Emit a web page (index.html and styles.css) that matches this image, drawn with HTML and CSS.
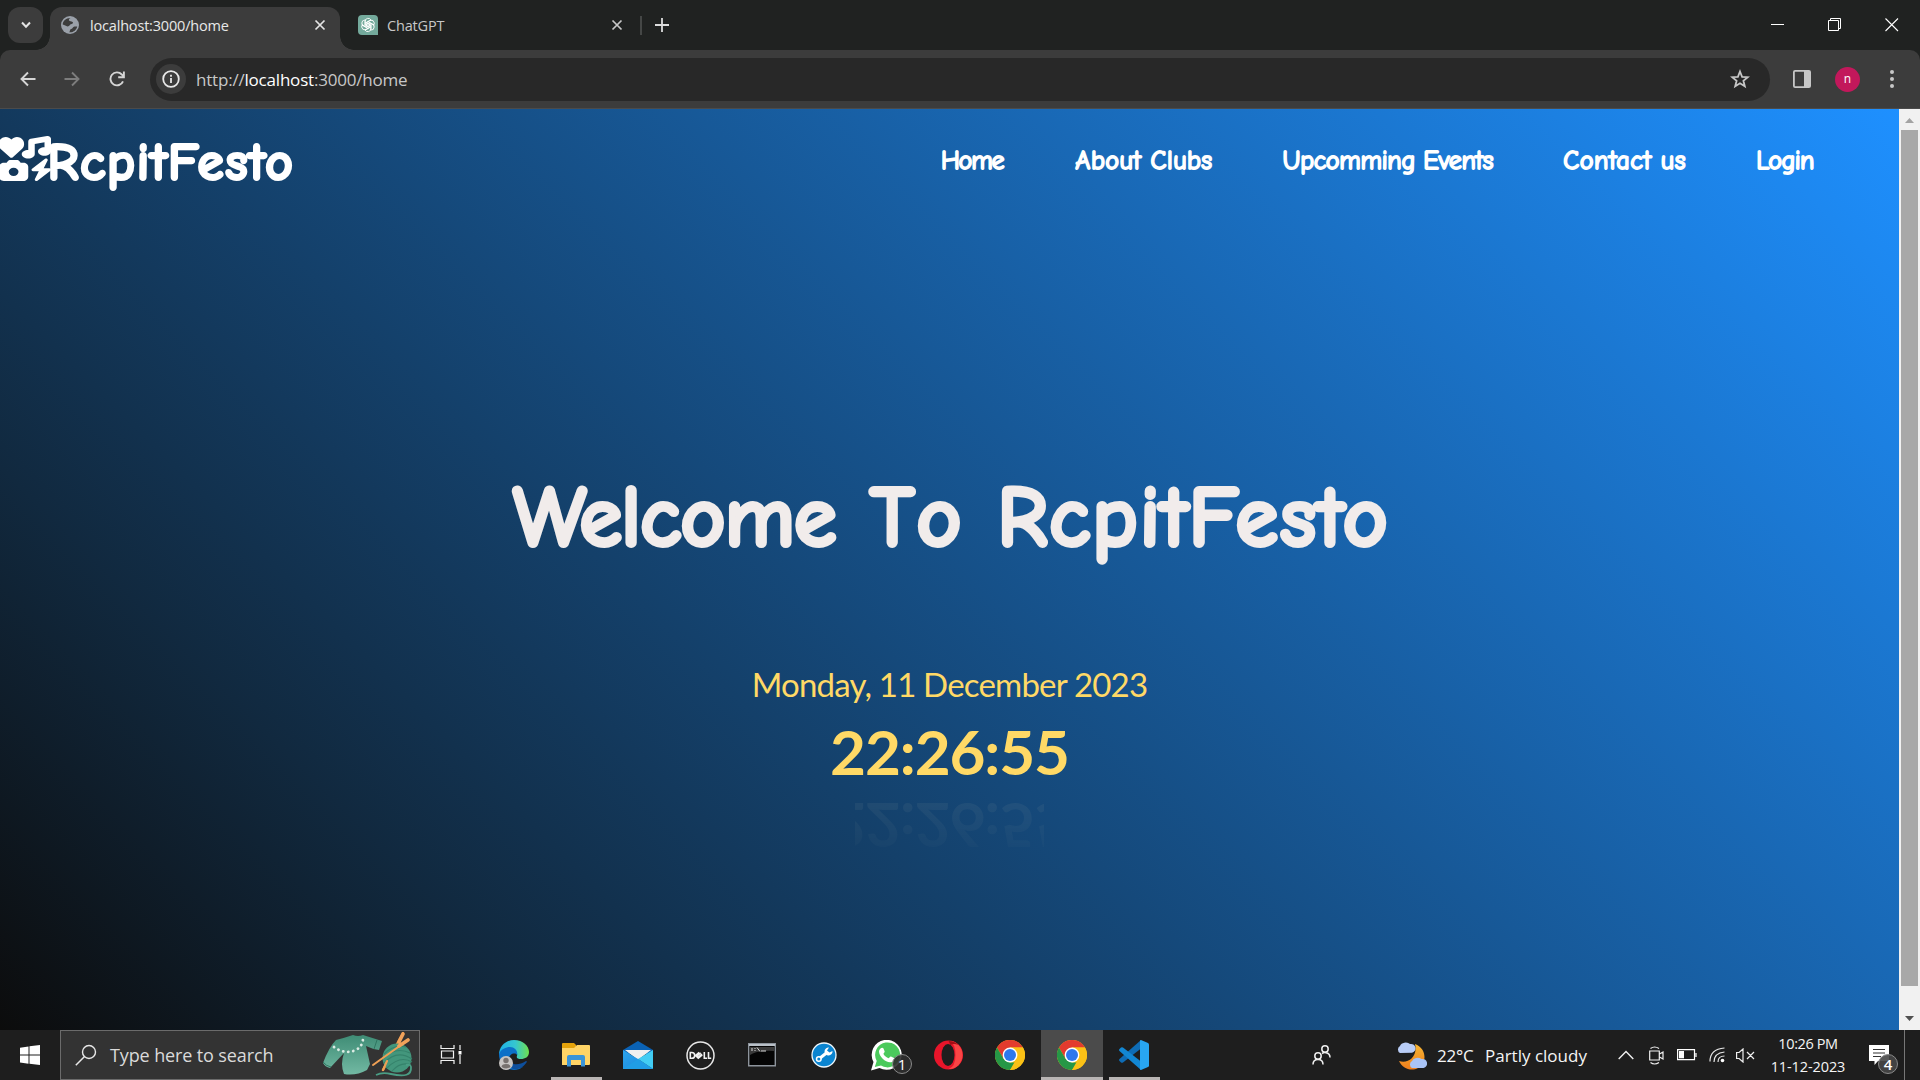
FILE: index.html
```
<!DOCTYPE html>
<html lang="en">
<head>
<meta charset="utf-8">
<title>localhost:3000/home</title>
<link rel="stylesheet" href="styles.css">
</head>
<body>
<svg width="0" height="0" class="defs">
  <defs>
    <symbol id="chrome" viewBox="0 0 30 30">
      <circle cx="15" cy="15" r="15" fill="#fbc116"/>
      <path d="M2 7.5A15 15 0 0 1 28 7.5H15L8.5 18.7z" fill="#e33b2e"/>
      <path d="M2 7.5 8.5 18.8 15 22.5h6.5L15 30A15 15 0 0 1 2 7.5z" fill="#269746"/>
      <path d="M21.5 18.7 15 30A15 15 0 0 0 28 7.5H15z" fill="#fbc116"/>
      <circle cx="15" cy="15" r="7.4" fill="#fff"/>
      <circle cx="15" cy="15" r="6" fill="#2e78ee"/>
    </symbol>
  </defs>
</svg>

<header class="tabstrip">
  <div class="tab-search"><svg width="12" height="8" viewBox="0 0 12 8"><path d="M2 1.5 6 5.8l4-4.3" fill="none" stroke="#e3e3e3" stroke-width="2"/></svg></div>
  <div class="tab active">
    <svg width="18" height="18" viewBox="0 0 18 18"><circle cx="9" cy="9" r="9" fill="#9aa0a9"/><path d="M9.5 2C7 3.500 7.500 5 10.500 5.500c2 .3 2 2 .2 2.500-2.700.6-1.500 2.200-4.200 2.400-1.600-.4-2.800-1.700-4.800-2C1.800 5 5 1.800 9.500 2zM8 16.300c1.500-.4.300-3 2.300-3.200 1.500-.2 1.400-2.600 3.200-2.600h2.700c-.6 3.500-4 6.300-8.200 5.800z" fill="#3c3c3c"/></svg>
    <span class="tab-title">localhost:3000/home</span>
    <svg class="x" width="12" height="12" viewBox="0 0 12 12"><path d="m1.500 1.500 9 9m0-9-9 9" stroke="#e3e3e3" stroke-width="1.700"/></svg>
  </div>
  <div class="tab idle">
    <svg width="20" height="20" viewBox="0 0 20 20"><path d="M4 0h12a4 4 0 0 1 4 4v16H4a4 4 0 0 1-4-4V4a4 4 0 0 1 4-4z" fill="#74aa9c"/><g fill="none" stroke="#fff" stroke-width=".9"><path id="p" d="M7 11.700V6.500a3.200 3.200 0 0 1 6-1.500L8.800 7.400v4.800"/><use href="#p" transform="rotate(60 10 10)"/><use href="#p" transform="rotate(120 10 10)"/><use href="#p" transform="rotate(180 10 10)"/><use href="#p" transform="rotate(240 10 10)"/><use href="#p" transform="rotate(300 10 10)"/></g></svg>
    <span class="tab-title">ChatGPT</span>
    <svg class="x" width="12" height="12" viewBox="0 0 12 12"><path d="m1.500 1.500 9 9m0-9-9 9" stroke="#c7c7c7" stroke-width="1.700"/></svg>
  </div>
  <i class="tab-sep"></i>
  <svg class="new-tab" width="14" height="14" viewBox="0 0 14 14"><path d="M7 0v14M0 7h14" stroke="#dcdcdc" stroke-width="1.800"/></svg>
  <div class="window-controls">
    <svg width="14" height="14" viewBox="0 0 14 14"><path d="M0 6.500h13" stroke="#fff"/></svg>
    <svg width="14" height="14" viewBox="0 0 14 14"><path d="M.5 2.500h10v10H.5zM2.500 2.500V.5h10v10h-2" fill="none" stroke="#fff"/></svg>
    <svg width="14" height="14" viewBox="0 0 14 14"><path d="m.5.500 12.500 12.500m0-12.500L.5 13" stroke="#fff" stroke-width="1.100"/></svg>
  </div>
</header>

<div class="toolbar-back">
<div class="toolbar">
  <svg class="nav-ico" width="16" height="16" viewBox="0 0 16 16"><path d="M15.500 8H2M8 1.500 1.500 8 8 14.500" fill="none" stroke="#d5d5d5" stroke-width="1.900"/></svg>
  <svg class="nav-ico" width="16" height="16" viewBox="0 0 16 16"><path d="M.5 8H14M8 1.500 14.500 8 8 14.500" fill="none" stroke="#7d7d7d" stroke-width="1.900"/></svg>
  <svg class="nav-ico" width="16" height="16" viewBox="0 0 16 16"><path d="M14 10.300A6.500 6.500 0 1 1 12.800 3.500L14.500 5.200M14.900.5v5.700H9.200" fill="none" stroke="#d5d5d5" stroke-width="1.900"/></svg>
  <div class="omnibox">
    <div class="info"><svg width="18" height="18" viewBox="0 0 18 18"><circle cx="9" cy="9" r="7.800" fill="none" stroke="#e8e8e8" stroke-width="1.800"/><path d="M9 8v5M9 4.700v2" stroke="#e8e8e8" stroke-width="1.800"/></svg></div>
    <span class="url">http://<b>localhost</b>:3000/home</span>
    <svg class="star" width="20" height="20" viewBox="0 0 20 20"><path d="m10 2.500 2.100 5.300 5.700.4-4.400 3.600 1.400 5.500-4.800-3-4.800 3 1.400-5.500L2.200 8.200l5.700-.4z" fill="none" stroke="#c7c7c7" stroke-width="1.800"/></svg>
  </div>
  <svg class="panel" width="18" height="18" viewBox="0 0 18 18"><rect x=".9" y=".9" width="16.200" height="16.200" rx="1.200" fill="none" stroke="#c7c7c7" stroke-width="1.800"/><path d="M11 1h6v16h-6z" fill="#c7c7c7"/></svg>
  <div class="avatar">n</div>
  <svg class="kebab" width="4" height="18" viewBox="0 0 4 18"><g fill="#c7c7c7"><circle cx="2" cy="2" r="2"/><circle cx="2" cy="9" r="2"/><circle cx="2" cy="16" r="2"/></g></svg>
</div>
</div>

<main class="viewport">
  <div class="page">
    <div class="navbar">
      <div class="brand">
        <svg width="52" height="45" viewBox="0 0 512 512" preserveAspectRatio="none" fill="#fff"><path d="M108 242 14 146C-16 110-10 46 34 20c34-18 64-8 88 20 24-28 54-38 88-20 44 26 48 90 18 126l-92 96q-14 12-28 0z"/><path d="M500.300 7.300C507.700 13.300 512 22.400 512 32v144c0 26.500-28.700 48-64 48s-64-21.500-64-48 28.700-48 64-48V71l-96 19.200V208c0 26.500-28.700 48-64 48s-64-21.500-64-48 28.700-48 64-48V64c0-15.300 10.800-28.400 25.700-31.400l160-32c9.400-1.900 19.100.6 26.600 6.700z"/><path fill-rule="evenodd" d="M74.700 304l11.800-17.800c5.900-8.900 15.900-14.200 26.600-14.200h61.700c10.700 0 20.700 5.300 26.600 14.200L213.300 304H240c26.500 0 48 21.500 48 48v112c0 26.500-21.500 48-48 48H48c-26.500 0-48-21.500-48-48V352c0-26.500 21.500-48 48-48zM192 408a48 48 0 1 0-96 0 48 48 0 1 0 96 0z"/><path d="M478.700 278.300 440.300 368H496c6.700 0 12.600 4.100 15 10.400s.6 13.300-4.400 17.700l-128 112c-5.600 4.900-13.900 5.300-19.900.9s-8.200-12.400-5.300-19.200L391.700 400H336c-6.700 0-12.600-4.100-15-10.400s-.6-13.300 4.400-17.700l128-112c5.600-4.900 13.900-5.300 19.900-.9s8.200 12.400 5.400 19.300z"/></svg>
        <span class="brand-name">RcpitFesto</span>
      </div>
      <nav class="links">
        <a class="l-home">Home</a><a class="l-clubs">About Clubs</a><a class="l-events">Upcomming Events</a><a class="l-contact">Contact us</a><a class="l-login">Login</a>
      </nav>
    </div>
    <h1 class="hero"><span class="w1">Welcome</span> <span class="w2">To</span> <span class="w3">RcpitFesto</span></h1>
    <div class="date">Monday, 11 December 2023</div>
    <div class="time">22:26:55</div>
    <div class="mirror" aria-hidden="true"><div class="mirror-text">22:26:55</div></div>
  </div>
  <div class="scrollbar">
    <svg width="9" height="5" viewBox="0 0 9 5"><path d="M0 5 4.500 0 9 5z" fill="#a3a3a3"/></svg>
    <div class="thumb"></div>
    <svg width="9" height="5" viewBox="0 0 9 5"><path d="M0 0 4.500 5 9 0z" fill="#505050"/></svg>
  </div>
</main>

<footer class="taskbar">
  <div class="start"><svg width="20" height="20" viewBox="0 0 20 20"><path d="M0 2.700 8.500 1.500V9.500H0zM9.500 1.300 20 0v9.500H9.500zM0 10.500h8.500v8.200L0 17.500zM9.500 10.500H20V20L9.500 18.700z" fill="#fff"/></svg></div>
  <div class="search">
    <svg width="22" height="22" viewBox="0 0 22 22"><circle cx="14" cy="8" r="6.500" fill="none" stroke="#e8e8e8" stroke-width="1.400"/><path d="M9.300 12.700.8 21.200" stroke="#e8e8e8" stroke-width="1.500"/></svg>
    <span class="search-text">Type here to search</span>
    <svg class="knit" width="92" height="46" viewBox="0 0 92 46">
      <defs><linearGradient id="kg" x1="0" y1="0" x2="0" y2="1"><stop offset="0" stop-color="#3f8c75"/><stop offset="1" stop-color="#72b9a3"/></linearGradient></defs>
      <path d="M14 8Q22 6 31 3q5 2 10 0L60 9l-3 9q-7-1-13-4l4 18-3 6q-11 6-23 4-4-10 0-21L8 36Q3 35 1 31 7 15 14 8z" fill="url(#kg)"/>
      <path d="M1 30q3 4 8 5M55 8l-3 9" stroke="#2f7661" fill="none"/>
      <path d="M12 15q11 8 22 3 7-4 7-12" fill="none" stroke="#dcebe4" stroke-width="2.800" stroke-linecap="round" stroke-dasharray=".1 5"/>
      <path d="m81 1-20 37" stroke="#e99443" stroke-width="2.500" stroke-linecap="round"/>
      <circle cx="75" cy="26" r="14.500" fill="#43967c"/>
      <path d="M62 22q10-10 22-7M61 27q12-13 27-6M62 31q13-14 28-4M65 36q13-13 25-6M70 39q9-10 19-6" fill="none" stroke="#35826b" stroke-width="1.100"/>
      <path d="m65 29-4 9M86 8 51 33" stroke="#efa055" stroke-width="2.100" stroke-linecap="round"/><path d="m86 8-9 6M81 2l-4 8" stroke="#f1a25a" stroke-width="3.600" stroke-linecap="round"/>
      <path d="M54 43q6-3 15-1 21 5 20-7-.5-3-5-2" fill="none" stroke="#4a9d84" stroke-width="1.800"/>
    </svg>
  </div>
  <div class="app taskview"><svg width="22" height="22" viewBox="0 0 22 22"><path d="M1 1v3.500h13V1M1 20v-3.500h13V20M1.500 7h12v7h-12zM20 1v5M20 11v9" fill="none" stroke="#f2f2f2" stroke-width="1.200"/><path d="M18.500 7h3v3.500h-3z" fill="#fff"/></svg></div>
  <div class="app"><svg width="32" height="32" viewBox="0 0 32 32"><defs><linearGradient id="eg"><stop offset="0" stop-color="#1db1e8"/><stop offset=".55" stop-color="#36c6cf"/><stop offset="1" stop-color="#6fe04e"/></linearGradient></defs><path d="M1 16C1 7 8 1 16 1c9 0 15 6 15 12 0 5-4 7-8 7-3 0-5-1-4-3 1-4-2-6-6-6-5 0-10 2-12 5z" fill="url(#eg)"/><path d="M1 15c2-5 7-7 11-7 5 0 8 4 7 8-2-3-8-1-8 4 0 7 8 10 14 8-3 2-6 3-9 3C7 31 1 24 1 15z" fill="#0c70c8"/><path d="M11 19c0 6 8 9 17 3 1 0 1 .5.500 1.500C25 29 19 31 15 30c-4-2-6-7-4-11z" fill="#0e4f9c"/><circle cx="8" cy="24" r="7" fill="#c8c5c3"/><circle cx="8" cy="21.500" r="2.700" fill="#77716e"/><path d="M3.500 28q0-3 4.500-3t4.500 3q-4 3-9 0z" fill="#77716e"/></svg></div>
  <div class="app open"><svg width="28" height="24" viewBox="0 0 28 24"><path d="M0 1q0-1 1-1h11l2 2v5H0z" fill="#e5a30b"/><path d="M0 5h12l3-3h12q1 0 1 1v18q0 1-1 1H0z" fill="#ffd466"/><path d="M5 23.500V14q0-2 2-2h14q2 0 2 2v9.500h-4V17H9v6.500z" fill="#3a94d8"/></svg></div>
  <div class="app"><svg width="30" height="28" viewBox="0 0 30 28"><defs><linearGradient id="mg" x2="1" y2="1"><stop offset="0" stop-color="#2ea4ec"/><stop offset="1" stop-color="#1787dc"/></linearGradient></defs><path d="M15 0 30 9v4H0V9z" fill="#0a62b5"/><path d="M2 9h26L15 19z" fill="#f0f0f0"/><path d="M0 9 15 18 30 28H0z" fill="url(#mg)"/><path d="M30 9 15 18l15 10z" fill="#42cdf4"/><path d="M0 28 15 18l15 10z" fill="#209de6"/></svg></div>
  <div class="app"><svg width="29" height="29" viewBox="0 0 29 29"><circle cx="14.500" cy="14.500" r="13.500" fill="none" stroke="#e8e8e8" stroke-width="1.500"/><g fill="none" stroke="#f2f2f2" stroke-width="1.600"><path d="M4.300 11.500h1.500a2.900 2.900 0 0 1 0 5.800H4.300zM18.300 11v6.300h2.700M22.500 11v6.300h2.700M9.500 14.500l3.700-3.200M10.500 15.500l4.200-3.600M11.500 16.800l4.500-3.800M9.500 14.500l2.800 2.700 4-3.200"/></g></svg></div>
  <div class="app"><svg width="28" height="24" viewBox="0 0 28 24"><path d="M.7.700h26.600v22H.7z" fill="#050505" stroke="#8d949c" stroke-width="1.400"/><path d="M1 1h26v2H1z" fill="#b9c0c8"/><path d="M2 12q8-5 24-4V4H2z" fill="#3a3a3a"/><path d="M4 5v3M7 5v1m0 1v1M9 4.500l3 4M13 8h5" stroke="#d8d8d8"/></svg></div>
  <div class="app"><svg width="26" height="26" viewBox="0 0 26 26"><circle cx="13" cy="13" r="12" fill="#0a84d0" stroke="#eef6fb" stroke-width="1.300"/><path d="m8.500 16.500 7.500-6" stroke="#fff" stroke-width="3"/><circle cx="7.800" cy="17" r="2.300" fill="#0a84d0" stroke="#fff" stroke-width="1.500"/><path d="M21.500 9a4 4 0 1 1-3.500-3.500l-2 3 2.500 2z" fill="#fff"/></svg></div>
  <div class="app badge-host"><svg width="31" height="31" viewBox="0 0 31 31"><path d="M0 30.500 2.500 22A15 15 0 1 1 8.500 28z" fill="#fff"/><path d="M3.800 27 5.700 21A12.500 12.500 0 1 1 10 25.500z" fill="#4bca5c"/><path d="M9.500 8.500c1-1 2.500-1 3 0l1.200 3c0 1-1.500 2-1.200 2.500 1 2 3 3.500 5 4.200.8 0 1.500-2 2.500-1.700l3 1.500c1 1 0 3.500-2 4-5 2-13-5-13-10.500 0-1.200.7-2.200 1.500-3z" fill="#fff"/></svg><span class="badge">1</span></div>
  <div class="app"><svg width="29" height="30" viewBox="0 0 29 30"><ellipse cx="14.500" cy="15" rx="14.500" ry="14.500" fill="#e8152a"/><path d="M14.500 1q6-.5 10 4 4 4.500 4 10t-4 10q-4 4.500-10 4 7-2 7-14t-7-14z" fill="#fa4545"/><path d="M14.500 1c5 0 8 2 10 4-5-2-8 0-8 0z" fill="#a60c14"/><ellipse cx="14" cy="15" rx="6.500" ry="11" fill="#1e1e1e"/></svg></div>
  <div class="app"><svg width="30" height="30"><use href="#chrome"/></svg></div>
  <div class="app open current"><svg width="30" height="30"><use href="#chrome"/></svg></div>
  <div class="app open last"><svg width="30" height="30" viewBox="0 0 30 30"><path d="M22 0v8.500L4 22.500q-1 .7-2 0L.5 21q-1-1 0-2z" fill="#0e6cb5"/><path d="M22 30v-8.500L4 7.500q-1-.7-2 0L.5 9q-1 1 0 2z" fill="#1287d3"/><path d="m22 0 7 3q1 .5 1 1.500v21q0 1-1 1.500l-7 3q-1 0-1-1V1q0-1 1-1z" fill="#28a6f2"/></svg></div>

  <div class="tray">
    <svg class="people" width="19" height="20" viewBox="0 0 19 20"><g fill="none" stroke="#f0f0f0" stroke-width="1.500"><circle cx="13" cy="4" r="3.200"/><circle cx="6" cy="11" r="3.200"/><path d="M1 19.500q0-5 5-5t5 5M10 8.500q2-1.300 4-.8 4 .5 4 4.800"/></g></svg>
    <svg class="weather" width="31" height="29" viewBox="0 0 31 29"><defs><linearGradient id="mo" x2="0" y2="1"><stop offset="0" stop-color="#f7b733"/><stop offset="1" stop-color="#ef7d1c"/></linearGradient></defs><path d="M19 3c11 4 13 18 3 24-7 4-16 0-19-7 9 3 19-4 16-17z" fill="url(#mo)"/><path d="M4 12a4 4 0 0 1 0-7 6 5 0 0 1 10-2 4.500 4.500 0 0 1 2 8.800z" fill="#b9cdf7"/><path d="M16 27a4 4 0 0 1 0-7 6 5 0 0 1 9.500-2 4.500 4.500 0 0 1 2 9z" fill="#a9c3f6"/></svg>
    <span class="temp">22°C</span><span class="cond">Partly cloudy</span>
    <svg class="chev" width="16" height="10" viewBox="0 0 16 10"><path d="m.7 9 7.300-7.500L15.300 9" fill="none" stroke="#f0f0f0" stroke-width="1.400"/></svg>
    <svg class="meet" width="15" height="19" viewBox="0 0 15 19"><path d="M.7 5h9.600v9H.7zM10.500 8 14 6v7l-3.500-2M1.500 2.500Q5.500-.5 10 2.500M1.500 16.500q4 3 8.500 0" fill="none" stroke="#f0f0f0" stroke-width="1.200"/></svg>
    <svg class="batt" width="20" height="12" viewBox="0 0 20 12"><path d="M.6.600h16.900v10H.6zM19 4v4" fill="none" stroke="#fff" stroke-width="1.200"/><path d="M2 2h5v7.300H2z" fill="#fff"/></svg>
    <svg class="wifi" width="17" height="16" viewBox="0 0 17 16"><g fill="none" stroke="#e8e8e8" stroke-width="1.200"><path d="M1 14.500Q1 2 15.500 1M5 15Q5 6 15.500 5M9 15q0-6 6.500-6"/></g><circle cx="13.500" cy="13.500" r="1.800" fill="#fff"/></svg>
    <svg class="vol" width="19" height="15" viewBox="0 0 19 15"><path d="M.6 4.500h2.500L7 1v13L3.100 10.500H.6zM11 4l7 7m0-7-7 7" fill="none" stroke="#f0f0f0" stroke-width="1.200"/></svg>
    <div class="clock"><span class="c-time">10:26 PM</span><span>11-12-2023</span></div>
    <div class="notes"><svg width="20" height="20" viewBox="0 0 20 20"><path d="M0 0h20v16H9l-3.500 4v-4H0z" fill="#fff"/><path d="M4 4.500h12M4 8h12M4 11.500h8" stroke="#333" stroke-width="1.100"/></svg><span class="badge">4</span></div>
    <i class="desk"></i>
  </div>
</footer>
</body>
</html>
```
FILE: styles.css
```
* { box-sizing: border-box; }
body {
  margin: 0; width: 1920px; height: 1080px; overflow: hidden;
  display: flex; flex-direction: column; background: #202221;
  font-family: "Open Sans", "Noto Sans", sans-serif;
}
svg { display: block; flex: none; }
.defs { position: absolute; }

/* Tab strip */
.tabstrip { height: 50px; flex: none; display: flex; padding-left: 8px; background: #202221; }
.tab-search { width: 35px; height: 36px; margin-top: 7px; border-radius: 12px; background: #3c3c3c; display: flex; align-items: center; justify-content: center; }
.tab { display: flex; align-items: center; font-size: 14.500px; letter-spacing: -.18px; }
.tab.active { position: relative; width: 290px; height: 43px; margin: 7px 0 0 7px; padding: 0 14px 7px 11px; background: #3c3c3c; border-radius: 12px 12px 0 0; color: #e8e8e8; }
.tab.active::before, .tab.active::after { content: ""; position: absolute; bottom: 0; width: 14px; height: 14px; }
.tab.active::before { left: -14px; background: radial-gradient(circle at 0 0, transparent 13.500px, #3c3c3c 14px); }
.tab.active::after { right: -14px; background: radial-gradient(circle at 100% 0, transparent 13.500px, #3c3c3c 14px); }
.tab-title { margin-left: 11px; }
.tab.idle .tab-title { margin-left: 9px; }
.x { margin-left: auto; }
.tab.idle { width: 283px; padding-left: 18px; color: #c7c7c7; }
.tab-sep { width: 2px; height: 19px; margin: 16px 0 0 17px; background: #454746; }
.new-tab { margin: 18px 0 0 13px; }
.window-controls { margin: 18px 21px 0 auto; display: flex; gap: 43px; }

/* Toolbar */
.toolbar-back { height: 59px; flex: none; background: #202221; }
.toolbar { height: 59px; display: flex; align-items: center; padding: 0 26px 0 20px; background: #3c3c3c; border-radius: 10px 10px 0 0; border-bottom: 1px solid #4b4b4b; }
.nav-ico { margin-right: 28px; }
.nav-ico + .nav-ico + .nav-ico { margin: 0 25px 0 1px; }
.omnibox { width: 1620px; height: 43px; display: flex; align-items: center; padding: 0 20px 0 6px; border-radius: 22px; background: #282828; }
.info { width: 30px; height: 30px; border-radius: 50%; background: #3c3c3c; display: flex; align-items: center; justify-content: center; }
.url { margin-left: 10px; color: #c7c7c7; font-size: 17px; letter-spacing: -.2px; padding-top: 1px; }
.url b { font-weight: 400; color: #fff; }
.star { margin-left: auto; }
.panel { margin-left: 23px; }
.avatar { width: 25px; height: 25px; margin: 0 30px 0 24px; border-radius: 50%; background: #c2185b; color: #fff; font-size: 12px; line-height: 23px; text-align: center; }

/* Page */
.viewport { height: 921px; flex: none; display: flex; }
.page { width: 1899px; display: flex; flex-direction: column; align-items: center; background: linear-gradient(45deg, #0c0c0c, #11293f 20%, #1e90ff); }
.navbar { width: 100%; height: 100px; display: flex; justify-content: space-between; align-items: flex-start; font-family: "Comic Neue", "Comic Sans MS", cursive; color: #fff; }
.brand { display: flex; padding-top: 27px; margin-left: -1px; }
.brand-name { margin: 0 0 0 -3px; font-size: 51px; line-height: 54px; letter-spacing: 2.600px; -webkit-text-stroke: 4px #fff; }
.links { display: flex; gap: 70px; padding: 36px 85px 0 0; font-size: 26px; line-height: 32px; -webkit-text-stroke: 1.800px #fff; }
.l-home { letter-spacing: -1.200px; margin-right: 2px; }
.l-clubs { letter-spacing: .5px; }
.l-events { letter-spacing: -.3px; }
.l-contact { letter-spacing: .6px; }
.l-login { letter-spacing: -.5px; }
.hero { margin: 259px 0 0 5px; font: 400 83px/100px "Comic Neue", "Comic Sans MS", cursive; color: #f1eceb; -webkit-text-stroke: 6px #f1eceb; display: flex; }
.w1 { letter-spacing: .4px; }
.w2 { letter-spacing: 11px; margin: 0 26px 0 34px; }
.w3 { letter-spacing: 3.300px; }
.date { margin-top: 96px; font: 400 33px/40px Lato, sans-serif; letter-spacing: -.8px; color: #ffd966; }
.time { margin-top: 17px; font: 700 62px/60px Lato, sans-serif; letter-spacing: -1.100px; color: #ffd966; }
.mirror { width: 189px; height: 60px; margin-top: 16px; overflow: hidden; display: flex; justify-content: center; opacity: .1; -webkit-mask-image: linear-gradient(#000, rgba(0, 0, 0, .2)); mask-image: linear-gradient(#000, rgba(0, 0, 0, .2)); }
.mirror-text { transform: scaleY(-1); font: 700 62px/60px Lato, sans-serif; letter-spacing: -1.100px; color: #9aa5a0; }
.scrollbar { width: 21px; display: flex; flex-direction: column; align-items: center; justify-content: space-between; padding: 9px 2px 9px 1px; background: #f1f1f1; }
.thumb { width: 17px; height: 856px; margin-bottom: 24px; background: #a8a8a8; }

/* Taskbar */
.taskbar { height: 50px; flex: none; display: flex; background: #1e1e1e; color: #f5f5f5; }
.start { width: 60px; display: flex; align-items: center; justify-content: center; }
.search { width: 360px; height: 50px; display: flex; align-items: center; padding: 0 5px 0 14px; background: #333; border: 1px solid #6b6b6b; }
.search-text { margin-left: 13px; font-size: 18px; letter-spacing: -.12px; color: #dadada; }
.knit { margin-left: auto; }
.app { width: 62px; height: 50px; display: flex; align-items: center; justify-content: center; position: relative; }
.app.taskview { width: 63px; padding-right: 2px; }
.app.open::after { content: ""; position: absolute; bottom: 0; left: 6px; width: 51px; height: 3px; background: #b9b5b4; }
.app.current { background: #4b4b4b; }
.app.current::after { left: 0; width: 62px; }
.badge { position: absolute; width: 20px; height: 20px; border-radius: 50%; border: 1px solid #8a8a8a; background: rgba(45, 45, 45, .9); font-size: 15px; line-height: 18px; text-align: center; color: #fff; }
.badge-host .badge { left: 37px; top: 24px; }
.tray { flex: 1; display: flex; align-items: center; font-size: 17px; }
.people { margin-left: 147px; }
.weather { margin: 0 10px 0 65px; }
.temp { width: 48px; letter-spacing: -.2px; }
.cond { width: 133px; }
.temp, .cond { white-space: nowrap; }
.meet { margin-left: 15px; }
.batt { margin-left: 13px; }
.wifi { margin-left: 12px; }
.vol { margin-left: 10px; }
.clock { width: 76px; margin-left: 15px; display: flex; flex-direction: column; align-items: center; font-size: 14.500px; line-height: 23px; white-space: nowrap; letter-spacing: -.1px; }
.c-time { letter-spacing: -.4px; }
.notes { position: relative; margin: 0 15px 0 23px; }
.notes .badge { left: 9px; top: 9px; font-weight: 600; background: rgba(70, 70, 70, .9); }
.desk { width: 1px; height: 50px; background: #777; }
```
